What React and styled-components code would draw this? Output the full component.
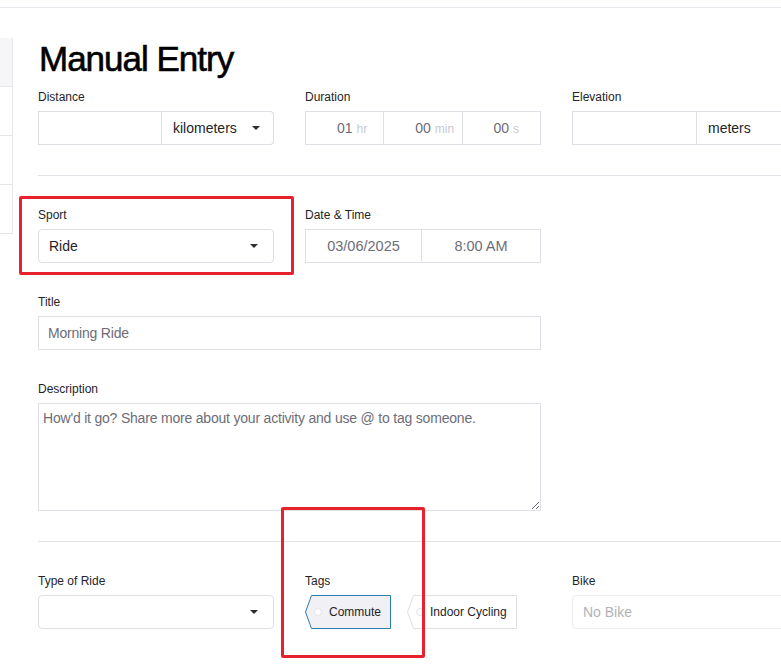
import React from "react";
import styled, { createGlobalStyle } from "styled-components";

const Global = createGlobalStyle`
  html, body { margin: 0; padding: 0; background: #fff; overflow: hidden; }
  body { font-family: "Liberation Sans", Arial, sans-serif; color: #242428; }
  * { box-sizing: border-box; }
`;

const Page = styled.div`
  position: relative;
  width: 781px;
  height: 667px;
  overflow: hidden;
`;

const TopBar = styled.div`
  height: 8px;
  border-bottom: 1px solid #e8e8ee;
`;

const Layout = styled.div`
  display: flex;
  margin-top: 30px;
`;

const Sidebar = styled.div`
  width: 13px;
  flex: none;
  display: flex;
  flex-direction: column;
`;

const SideItem = styled.div`
  height: 49px;
  border-right: 1px solid #e6e6eb;
  border-bottom: 1px solid #e6e6eb;
  background: ${(p) => (p.$active ? "#f6f6f9" : "#fff")};
`;

const Main = styled.div`
  flex: none;
  width: 900px;
  padding-left: 25px;
`;

const Heading = styled.h1`
  margin: 0;
  font-size: 35px;
  line-height: 41px;
  font-weight: 400;
  letter-spacing: -1px;
  color: #000;
  padding-left: 1px;
  -webkit-text-stroke: 0.6px #000;
`;

const Grid = styled.div`
  display: grid;
  grid-template-columns: 236px 236px 236px;
  column-gap: 31px;
  margin-top: ${(p) => p.$mt}px;
`;

const Field = styled.div`
  display: flex;
  flex-direction: column;
  gap: 6px;
  grid-column: ${(p) => (p.$span ? `span ${p.$span}` : "auto")};
`;

const Label = styled.div`
  font-size: 12px;
  line-height: 16px;
  color: #242428;
`;

const Rule = styled.hr`
  margin: ${(p) => p.$mt}px 0 0 0;
  border: none;
  border-top: 1px solid #e2e2e8;
  height: 0;
`;

const Group = styled.div`
  display: flex;
  height: 34px;
`;

const PlainBox = styled.div`
  flex: ${(p) => (p.$w ? "none" : "1")};
  width: ${(p) => (p.$w ? `${p.$w}px` : "auto")};
  border: 1px solid #dfdfe6;
  border-left-width: ${(p) => (p.$first ? 1 : 0)}px;
  border-radius: ${(p) => (p.$round ? "0 4px 4px 0" : "0")};
  display: flex;
  align-items: center;
  justify-content: ${(p) => (p.$center ? "center" : "flex-start")};
  padding: 0 11px;
  font-size: ${(p) => (p.$muted ? "14.5px" : "14px")};
  color: ${(p) => (p.$muted ? "#6d6d78" : "#242428")};
  background: #fff;
`;

const Select = styled.div`
  height: 34px;
  border: 1px solid ${(p) => (p.$light ? "#ececf1" : "#dfdfe6")};
  border-radius: 4px;
  display: flex;
  align-items: center;
  justify-content: space-between;
  padding: 0 15px 0 10px;
  font-size: 14px;
  color: ${(p) => (p.$placeholder ? "#b2b2ba" : "#242428")};
`;

const Caret = styled.span`
  width: 0;
  height: 0;
  border-left: 4px solid transparent;
  border-right: 4px solid transparent;
  border-top: 4px solid #2b2b30;
  flex: none;
  margin-left: ${(p) => p.$ml || 0}px;
`;

const Num = styled.span`
  position: relative;
  font-size: 14px;
  color: #6d6d78;
`;

const Unit = styled.span`
  position: absolute;
  left: 100%;
  bottom: 0;
  font-size: 12px;
  color: #c9c9d1;
  margin-left: 4px;
  white-space: nowrap;
`;

const TextInput = styled.input`
  height: 34px;
  border: 1px solid #dfdfe6;
  border-radius: 0;
  padding: 0 9px;
  font-family: inherit;
  font-size: 14px;
  letter-spacing: -0.2px;
  color: #6d6d78;
  outline: none;
  width: 100%;
`;

const TextArea = styled.textarea`
  height: 108px;
  border: 1px solid #dfdfe6;
  border-radius: 0;
  padding: 6px 4px;
  font-family: inherit;
  font-size: 14px;
  letter-spacing: -0.2px;
  line-height: 16px;
  color: #6d6d78;
  outline: none;
  width: 100%;
  &::placeholder { color: #6d6d78; opacity: 1; }
`;

const Tags = styled.div`
  display: flex;
  gap: 16px;
`;

const TagBox = styled.div`
  position: relative;
  width: ${(p) => p.$w}px;
  height: 34px;
  display: flex;
  align-items: center;
  padding-left: ${(p) => p.$pl}px;
  font-size: 12px;
  color: #242428;
`;

const TagShape = styled.svg`
  position: absolute;
  left: 0;
  top: 0;
`;

const TagText = styled.span`
  position: relative;
`;

const Annot = styled.div`
  position: absolute;
  border: 3px solid #e8222c;
  border-radius: 2px;
  pointer-events: none;
`;

function Tag({ label, w, pl, active }) {
  const h = 34;
  return (
    <TagBox $w={w} $pl={pl}>
      <TagShape width={w} height={h}>
        <path
          d={`M6.5 0.5 H${w - 0.5} V${h - 0.5} H6.5 L0.5 ${h / 2} Z`}
          fill={active ? "#f0f0f5" : "#fff"}
          stroke={active ? "#2a7bb4" : "#dfdfe6"}
          strokeWidth="1"
        />
        <circle cx="13" cy={h / 2} r="3.5" fill="#fff" stroke="#e2e2e8" />
      </TagShape>
      <TagText>{label}</TagText>
    </TagBox>
  );
}

function DurationCell({ value, unit, first }) {
  return (
    <PlainBox $first={first} $center>
      <Num>
        {value}
        <Unit>{unit}</Unit>
      </Num>
    </PlainBox>
  );
}

export default function App() {
  return (
    <>
      <Global />
      <Page>
        <TopBar />
        <Layout>
          <Sidebar>
            <SideItem $active />
            <SideItem />
            <SideItem />
            <SideItem />
          </Sidebar>
          <Main>
            <Heading>Manual Entry</Heading>

            <Grid $mt={10}>
              <Field>
                <Label>Distance</Label>
                <Group>
                  <PlainBox $first $w={124} />
                  <PlainBox $w={112} $round>
                    kilometers
                    <Caret $ml={15} />
                  </PlainBox>
                </Group>
              </Field>
              <Field>
                <Label>Duration</Label>
                <Group>
                  <DurationCell first value="01" unit="hr" />
                  <DurationCell value="00" unit="min" />
                  <DurationCell value="00" unit="s" />
                </Group>
              </Field>
              <Field>
                <Label>Elevation</Label>
                <Group>
                  <PlainBox $first $w={125} />
                  <PlainBox $w={111} $round>
                    meters
                  </PlainBox>
                </Group>
              </Field>
            </Grid>

            <Rule $mt={30} />

            <Grid $mt={31}>
              <Field>
                <Label>Sport</Label>
                <Select>
                  Ride
                  <Caret />
                </Select>
              </Field>
              <Field>
                <Label>Date &amp; Time</Label>
                <Group>
                  <PlainBox $first $center $muted $w={117}>
                    03/06/2025
                  </PlainBox>
                  <PlainBox $center $muted $w={119}>
                    8:00 AM
                  </PlainBox>
                </Group>
              </Field>
            </Grid>

            <Grid $mt={31}>
              <Field $span={2}>
                <Label>Title</Label>
                <TextInput defaultValue="Morning Ride" />
              </Field>
            </Grid>

            <Grid $mt={31}>
              <Field $span={2}>
                <Label>Description</Label>
                <TextArea placeholder="How'd it go? Share more about your activity and use @ to tag someone." />
              </Field>
            </Grid>

            <Rule $mt={30} />

            <Grid $mt={31}>
              <Field>
                <Label>Type of Ride</Label>
                <Select>
                  <span />
                  <Caret />
                </Select>
              </Field>
              <Field>
                <Label>Tags</Label>
                <Tags>
                  <Tag label="Commute" w={86} pl={24} active />
                  <Tag label="Indoor Cycling" w={110} pl={23} />
                </Tags>
              </Field>
              <Field>
                <Label>Bike</Label>
                <Select $light $placeholder>
                  No Bike
                </Select>
              </Field>
            </Grid>
          </Main>
        </Layout>

        <Annot style={{ left: 19, top: 196, width: 275, height: 79 }} />
        <Annot style={{ left: 281, top: 507, width: 144, height: 151 }} />
      </Page>
    </>
  );
}
